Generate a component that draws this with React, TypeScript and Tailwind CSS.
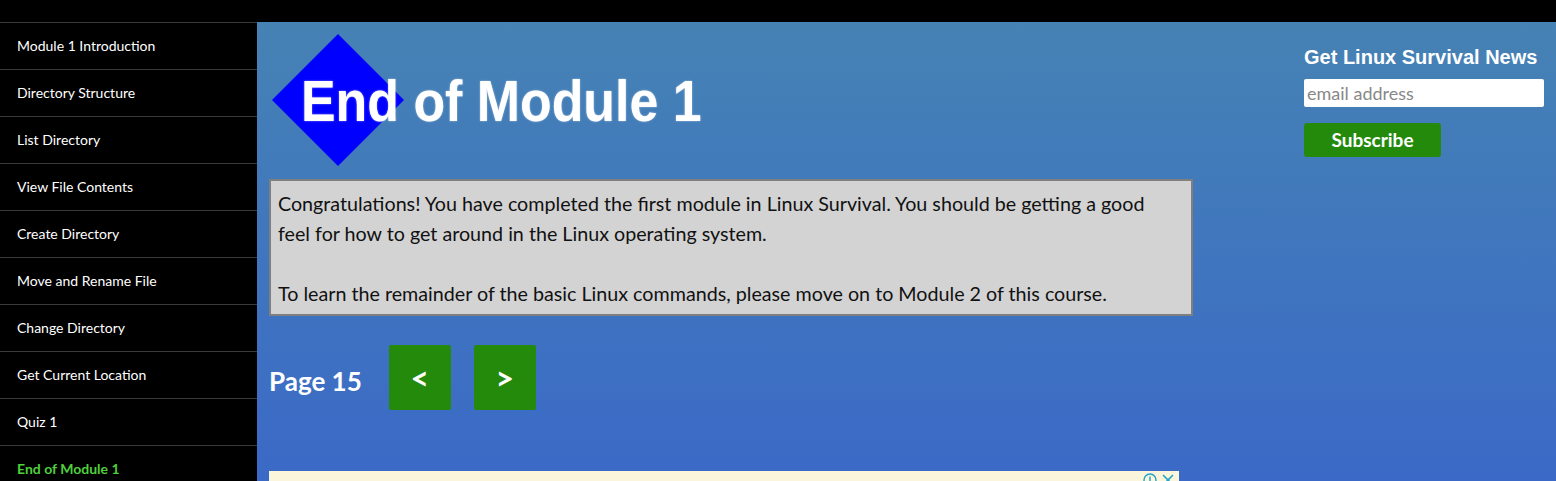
import React from "react";

const items = [
  "Module 1 Introduction",
  "Directory Structure",
  "List Directory",
  "View File Contents",
  "Create Directory",
  "Move and Rename File",
  "Change Directory",
  "Get Current Location",
  "Quiz 1",
];

const lato = "font-['Lato','Liberation_Sans',sans-serif]";
const arial = "font-['Liberation_Sans','Arial',sans-serif]";

export default function App() {
  return (
    <div className={`h-[481px] w-[1556px] overflow-hidden bg-black ${lato}`}>
      <div className="h-[22px] bg-black" />
      <div className="flex h-[459px]">
        {/* Sidebar */}
        <nav className="w-[257px] shrink-0 bg-black border-t border-[#3a3a3a]">
          {items.map((t) => (
            <div
              key={t}
              className="flex h-[47px] items-center border-b border-[#3a3a3a] pb-[2px] pl-[17px] text-[14px] text-white"
            >
              {t}
            </div>
          ))}
          <div className="flex h-[46px] items-center pb-[2px] pl-[17px] text-[14px] font-bold text-[#4fcf3c]">
            End of Module 1
          </div>
        </nav>

        {/* Main */}
        <main className="flex flex-1 bg-gradient-to-b from-[#4682b4] to-[#3b69c7]">
          <div className="w-[1040px] shrink-0 pl-[12px]">
            <div className="flex h-[157px] items-center">
              <div className="relative h-[150px] w-[440px]">
                <svg className="absolute left-[3px] top-[8px]" width="132" height="132" viewBox="0 0 132 132">
                  <polygon points="66,0 132,66 66,132 0,66" fill="#0000ff" />
                </svg>
                <div
                  className={`absolute left-[32px] top-[47px] origin-left scale-x-[0.91] whitespace-nowrap text-[57px] font-bold leading-none text-white ${arial} [text-shadow:0_0_2px_rgba(255,255,255,0.6)]`}
                >
                  End of Module 1
                </div>
              </div>
            </div>

            <div className="w-[924px] border-2 border-[#7f7f7f] bg-[#d3d3d3] pb-[5px] pl-[7px] pr-[10px] pt-[8px] text-[19.7px] leading-[30px] text-[#111]">
              <p>
                Congratulations! You have completed the first module in Linux Survival. You should be getting a good
                feel for how to get around in the Linux operating system.
              </p>
              <p className="mt-[30px]">
                To learn the remainder of the basic Linux commands, please move on to Module 2 of this course.
              </p>
            </div>

            <div className="mt-[29px] flex items-center">
              <span className="mr-[27px] pt-[8px] text-[26px] font-bold text-white">Page 15</span>
              <button className="flex h-[65px] w-[62px] items-center justify-center rounded-[2px] bg-[#248a0c] text-[32px] font-bold text-white">
                &lt;
              </button>
              <button className="ml-[23px] flex h-[65px] w-[62px] items-center justify-center rounded-[2px] bg-[#248a0c] text-[32px] font-bold text-white">
                &gt;
              </button>
            </div>

            <div className="relative mt-[61px] h-[30px] w-[910px] bg-[#fbf5dc]">
              <div className="absolute right-[4px] top-[2px] flex items-center gap-[4px] text-[#1fa3c9]">
                <svg width="14" height="14" viewBox="0 0 14 14" fill="none" stroke="currentColor" strokeWidth="1.4">
                  <circle cx="7" cy="7" r="6" />
                  <line x1="7" y1="3.5" x2="7" y2="8" />
                  <circle cx="7" cy="10.2" r="0.6" fill="currentColor" />
                </svg>
                <svg width="14" height="14" viewBox="0 0 14 14" fill="none" stroke="currentColor" strokeWidth="1.6">
                  <line x1="2" y1="2" x2="12" y2="12" />
                  <line x1="12" y1="2" x2="2" y2="12" />
                </svg>
              </div>
            </div>
          </div>

          <aside className="ml-[7px] pt-[20px]">
            <h3 className={`text-[20px] font-bold text-white ${arial}`}>Get Linux Survival News</h3>
            <input
              placeholder="email address"
              className="mt-[7px] block h-[28px] w-[240px] rounded-[2px] bg-white px-[3px] text-[18px] text-black placeholder:text-[#888]"
            />
            <button className="mt-[16px] h-[34px] w-[137px] rounded-[3px] bg-[#248a0c] text-[19px] font-bold text-white">
              Subscribe
            </button>
          </aside>
        </main>
      </div>
    </div>
  );
}
